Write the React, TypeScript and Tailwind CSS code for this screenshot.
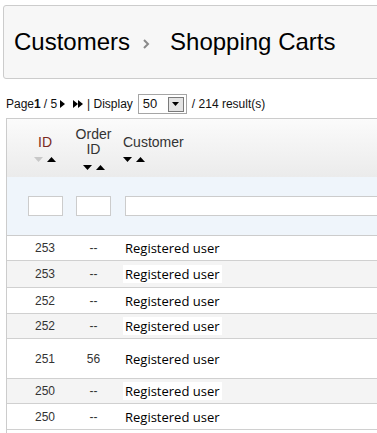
import React from "react";

const rows = [
  { id: "253", order: "--", h: "h-[25px]", alt: false },
  { id: "253", order: "--", h: "h-[27px]", alt: true },
  { id: "252", order: "--", h: "h-[26px]", alt: false },
  { id: "252", order: "--", h: "h-[25px]", alt: true },
  { id: "251", order: "56", h: "h-[40px]", alt: false },
  { id: "250", order: "--", h: "h-[25px]", alt: true },
  { id: "250", order: "--", h: "h-[26px]", alt: false },
];

const Tri = ({ dir, color }: { dir: "up" | "down"; color: string }) => (
  <svg width="9" height="5" viewBox="0 0 9 5">
    {dir === "down" ? (
      <polygon points="0,0 9,0 4.5,5" fill={color} />
    ) : (
      <polygon points="0,5 9,5 4.5,0" fill={color} />
    )}
  </svg>
);

const SortArrows = ({ downColor = "#000" }: { downColor?: string }) => (
  <div className="flex items-center gap-[4px]">
    <Tri dir="down" color={downColor} />
    <Tri dir="up" color="#000" />
  </div>
);

const Right = () => (
  <svg width="5" height="8" viewBox="0 0 5 8">
    <polygon points="0,0 5,4 0,8" fill="#000" />
  </svg>
);

export default function App() {
  return (
    <div
      className="w-[377px] h-[433px] overflow-hidden bg-white"
      style={{ fontFamily: '"Liberation Sans", Arial, sans-serif' }}
    >
      <div className="ml-[3px] mt-[5px] w-[420px] h-[74px] border border-[#cccccc] rounded-[3px] bg-[#f7f7f7] flex items-center pl-[10px] text-[24px] text-black">
        <span>Customers</span>
        <svg width="8" height="10" viewBox="0 0 8 10" className="ml-[12px] mr-[20px] mt-[3px]">
          <path d="M2 1 L6 5 L2 9" stroke="#8a8a8a" strokeWidth="2" fill="none" />
        </svg>
        <span>Shopping Carts</span>
      </div>

      <div className="mt-[15px] ml-[6px] h-[20px] flex items-center text-[12px] text-[#111]">
        <span>Page</span>
        <span className="font-bold">1</span>
        <span className="ml-[3px]">/ 5</span>
        <span className="ml-[3px]">
          <Right />
        </span>
        <span className="ml-[8px] flex">
          <Right />
          <Right />
        </span>
        <span className="ml-[4px]">| Display</span>
        <div className="ml-[5px] w-[49px] h-[20px] border border-[#a5a5a5] bg-white flex items-center justify-between pl-[4px] pr-[2px]">
          <span className="text-[13px]">50</span>
          <div className="w-[16px] h-[15px] border border-[#7a7a7a] bg-[#e4e4e4] flex items-center justify-center">
            <svg width="7" height="4" viewBox="0 0 7 4">
              <polygon points="0,0 7,0 3.5,4" fill="#000" />
            </svg>
          </div>
        </div>
        <span className="ml-[5px]">/ 214 result(s)</span>
      </div>

      <div className="mt-[4px] ml-[6px] w-[420px] border-l border-t border-[#cccccc]">
        <div className="h-[58px] flex bg-gradient-to-b from-[#fbfbfb] to-[#ebebeb] text-[14px]">
          <div className="w-[62px] pl-[14px] flex flex-col items-center justify-center">
            <span className="leading-[16px] text-[#7b2a22]">ID</span>
            <div className="mt-[7px]">
              <SortArrows downColor="#c8c8c8" />
            </div>
          </div>
          <div className="w-[49px] flex flex-col items-center justify-center text-[#333]">
            <span className="leading-[15px] text-center">
              Order
              <br />
              ID
            </span>
            <div className="mt-[8px]">
              <SortArrows />
            </div>
          </div>
          <div className="flex-1 pl-[5px] flex flex-col justify-center text-[#333]">
            <span className="leading-[16px]">Customer</span>
            <div className="mt-[7px]">
              <SortArrows />
            </div>
          </div>
        </div>

        <div className="h-[59px] flex items-center bg-[#eff5fb] border-b border-[#cccccc]">
          <div className="w-[62px] pl-[14px] flex justify-center">
            <div className="w-[35px] h-[20px] bg-white border border-[#cccccc]" />
          </div>
          <div className="w-[49px] flex justify-center">
            <div className="w-[35px] h-[20px] bg-white border border-[#cccccc]" />
          </div>
          <div className="flex-1 pl-[7px]">
            <div className="h-[20px] bg-white border border-[#cccccc]" />
          </div>
        </div>

        {rows.map((r, i) => (
          <div
            key={i}
            className={`${r.h} flex items-center border-b border-[#d0d0d0] ${r.alt ? "bg-[#f4f4f4]" : "bg-white"}`}
          >
            <div className="w-[62px] pl-[14px] text-center text-[12px] text-[#333]">{r.id}</div>
            <div className="w-[49px] text-center text-[12px] text-[#333]">{r.order}</div>
            <div className="flex-1 pl-[5px]">
              <span
                className={`text-[13px] text-black px-[2px] ${r.alt ? "bg-white" : ""}`}
                style={{ fontFamily: '"Open Sans", "Noto Sans", sans-serif' }}
              >
                Registered user
              </span>
            </div>
          </div>
        ))}
        <div className="h-[26px] bg-white" />
      </div>
    </div>
  );
}
